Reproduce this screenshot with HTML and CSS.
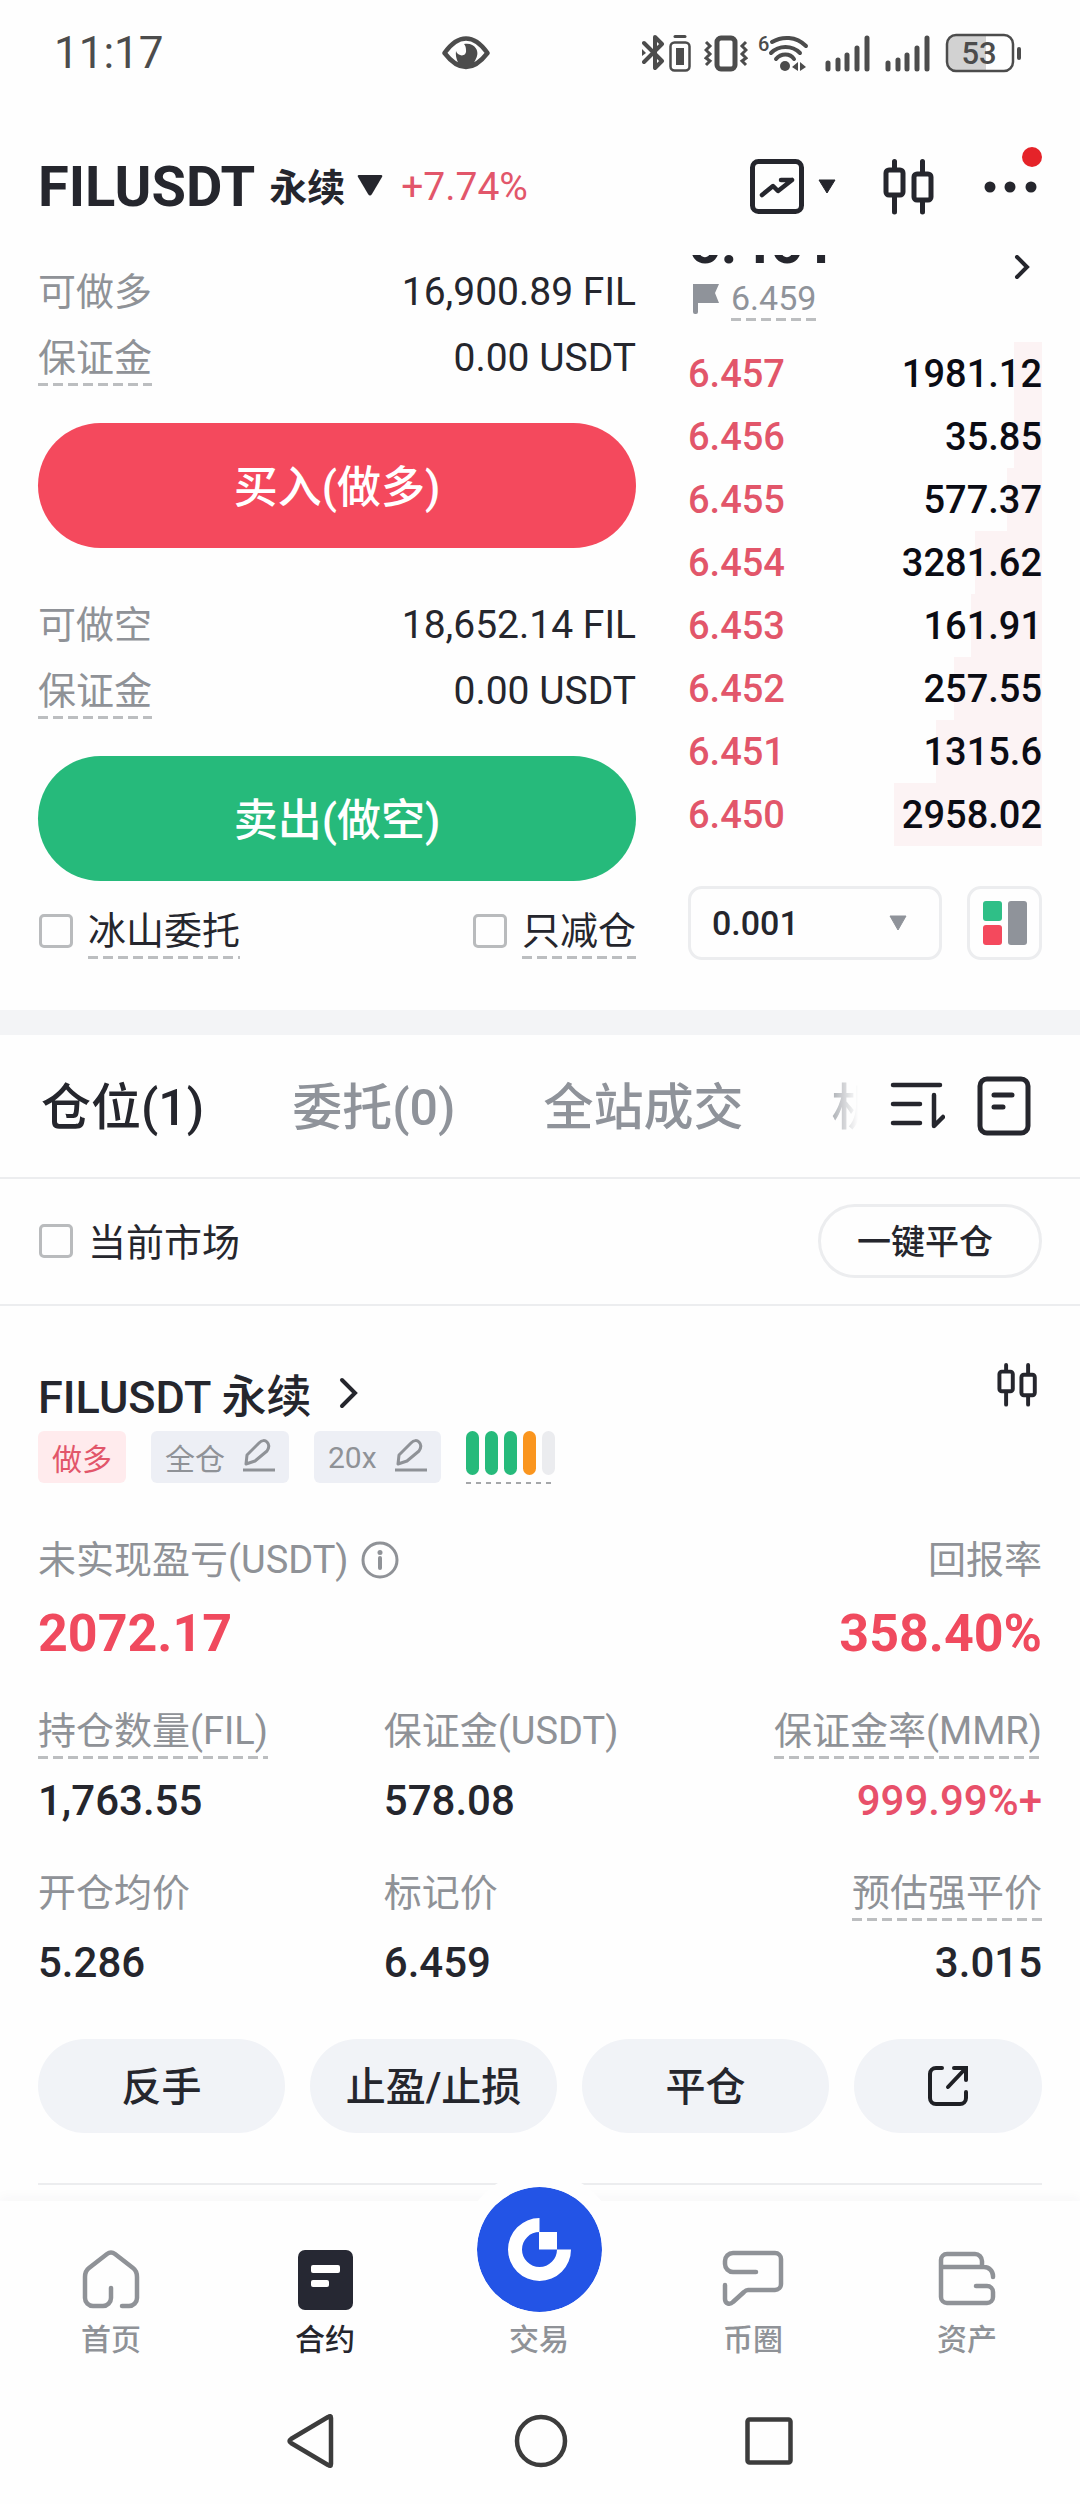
FILE: index.html
```html
<!DOCTYPE html>
<html lang="zh-CN">
<head>
    <meta charset="UTF-8">
    <meta name="viewport" content="width=device-width, initial-scale=1.0">
    <title>FILUSDT 永续</title>
    <link rel="stylesheet" href="styles.css">
</head>
<body>
    <!-- shared icons -->
    <svg class="sprite" aria-hidden="true">
        <symbol id="candles" viewBox="0 0 52 56">
            <g fill="none" stroke="#25262d" stroke-width="5" stroke-linecap="round">
                <rect x="3" y="11" width="17" height="25" rx="3"/>
                <rect x="31" y="15" width="17" height="26" rx="3"/>
                <path d="M11.5 2.500V10M11.500 37V53M39.500 2.500V13M39.500 42V53"/>
            </g>
        </symbol>
        <symbol id="pencil" viewBox="0 0 32 33">
            <g fill="none" stroke="#8f9297" stroke-width="3" stroke-linejoin="round">
                <path d="M3 25L4 16L16 4C19 1 22 1 24 3C27 6 26 9 24 12L12 22Z"/>
                <path d="M0 31H32"/>
            </g>
        </symbol>
        <symbol id="signal" viewBox="0 0 50 38">
            <path d="M4 29V35M14 26V35M23 21V35M33 14V35M43 4V35" fill="none" stroke="#4c4c4c" stroke-width="5" stroke-linecap="round"/>
        </symbol>
    </svg>

    <div class="status-bar">
        <span class="time">11:17</span>
        <svg class="eye" width="48" height="34" viewBox="0 0 48 34">
            <path d="M2.500 17C11 5 18 2.500 24 2.500S37 5 45.500 17C37 28 30 31 24 31S11 28 2.500 17Z" fill="none" stroke="#4c4c4c" stroke-width="4.500" stroke-linejoin="round"/>
            <path d="M22 8C32 6 37 14 35 20C34 24 31 27 31 31H17C17 26 13 23 14 15C16 21 25 21 24 14C24 11 23 9 22 8Z" fill="#4c4c4c"/>
        </svg>
        <div class="status-icons">
            <svg width="52" height="38" viewBox="0 0 52 38">
                <path d="M2 9L20 27L13 34V3L20 10L2 28" fill="none" stroke="#4c4c4c" stroke-width="4" stroke-linejoin="round" stroke-linecap="round"/>
                <path d="M0 15L4 19L0 22Z" fill="#4c4c4c"/>
                <rect x="28.500" y="8.500" width="19" height="28" rx="4" fill="none" stroke="#4c4c4c" stroke-width="2.500"/>
                <path d="M33 2.500H43" stroke="#4c4c4c" stroke-width="3" stroke-linecap="round"/>
                <rect x="34" y="14" width="8" height="17" fill="#4c4c4c"/>
            </svg>
            <svg width="44" height="38" viewBox="0 0 44 38">
                <rect x="13" y="4" width="18" height="31" rx="4" fill="none" stroke="#4c4c4c" stroke-width="5"/>
                <path d="M2 8L6 12L2 16L6 20L2 24L6 27L2 31M42 8L38 12L42 16L38 20L42 24L38 27L42 31" fill="none" stroke="#4c4c4c" stroke-width="3"/>
            </svg>
            <svg class="wifi" width="56" height="38" viewBox="0 0 56 38">
                <text x="0" y="17" font-size="20" font-weight="500" fill="#4c4c4c">6</text>
                <g fill="none" stroke="#4c4c4c" stroke-width="4" stroke-linecap="round">
                    <path d="M14 8C24 2 38 2 48 12M13 19C21 11 34 11 42 19M18 25C23 19 32 19 36 25"/>
                </g>
                <circle cx="27" cy="32" r="5" fill="#4c4c4c"/>
                <path d="M40 28V37L34 33ZM42 28L48 33L42 37Z" fill="#4c4c4c"/>
            </svg>
            <svg width="50" height="38"><use href="#signal"/></svg>
            <svg width="50" height="38"><use href="#signal"/></svg>
            <svg width="78" height="40" viewBox="0 0 78 40">
                <path d="M11 3H42V37H11C6 37 4 33 4 29V11C4 6 7 3 11 3Z" fill="#d2d2d2"/>
                <rect x="3" y="2" width="66" height="36" rx="9" fill="none" stroke="#4c4c4c" stroke-width="2.500"/>
                <path d="M75 16V25" stroke="#4c4c4c" stroke-width="4" stroke-linecap="round"/>
                <text x="35" y="31" text-anchor="middle" font-size="31" font-weight="500" fill="#4c4c4c">53</text>
            </svg>
        </div>
    </div>

    <header class="pair-header">
        <h1>FILUSDT</h1>
        <button class="contract-type">永续
            <svg width="26" height="22" viewBox="0 0 26 22"><path d="M2 1H24Q26 1 25 3L15 20Q13 23 11 20L1 3Q0 1 2 1Z" fill="#25262d"/></svg>
        </button>
        <span class="change">+7.74%</span>
        <div class="header-tools">
            <button class="chart-menu" aria-label="图表">
                <svg width="54" height="55" viewBox="0 0 54 55" fill="none" stroke="#25262d" stroke-linecap="round" stroke-linejoin="round">
                    <rect x="2.500" y="2.500" width="49" height="50" rx="6" stroke-width="5"/>
                    <path d="M12 36L23 27L28 32L42 21M31 21H42" stroke-width="4.500"/>
                </svg>
                <svg width="18" height="15" viewBox="0 0 18 15"><path d="M1 1H17L9 14Z" fill="#25262d" stroke="#25262d" stroke-linejoin="round"/></svg>
            </button>
            <button aria-label="K线"><svg width="52" height="56"><use href="#candles"/></svg></button>
            <button class="more" aria-label="更多">
                <svg width="60" height="12" viewBox="0 0 60 12" fill="#25262d"><circle cx="8" cy="6" r="5.500"/><circle cx="28" cy="6" r="5.500"/><circle cx="49" cy="6" r="5.500"/></svg>
                <span class="red-dot"></span>
            </button>
        </div>
    </header>

    <main>
        <section class="trade">
            <div class="order-form">
                <div class="row"><span class="label">可做多</span><span class="value">16,900.89 FIL</span></div>
                <div class="row"><span class="label dashed">保证金</span><span class="value">0.00 USDT</span></div>
                <button class="order-btn buy">买入(做多)</button>
                <div class="row second"><span class="label">可做空</span><span class="value">18,652.14 FIL</span></div>
                <div class="row"><span class="label dashed">保证金</span><span class="value">0.00 USDT</span></div>
                <button class="order-btn sell">卖出(做空)</button>
                <div class="row options">
                    <label class="check"><input type="checkbox"><span class="dashed">冰山委托</span></label>
                    <label class="check"><input type="checkbox"><span class="dashed">只减仓</span></label>
                </div>
            </div>

            <div class="order-book">
                <div class="last">
                    <span>6.461</span>
                    <svg width="28" height="66" viewBox="0 0 28 66"><path d="M3 42L13 52L3 62" fill="none" stroke="#25262d" stroke-width="4" stroke-linecap="round"/></svg>
                </div>
                <div class="mark">
                    <svg width="26" height="30" viewBox="0 0 26 30"><path d="M0 0H26L22 9L26 19H5V28Q5 30 3 30H2Q0 30 0 28Z" fill="#8f939a"/></svg>
                    <span class="dashed">6.459</span>
                </div>
                <table class="asks">
                    <tr style="--depth: 8%"><td>6.457</td><td>1981.12</td></tr>
                    <tr style="--depth: 8%"><td>6.456</td><td>35.85</td></tr>
                    <tr style="--depth: 10%"><td>6.455</td><td>577.37</td></tr>
                    <tr style="--depth: 19%"><td>6.454</td><td>3281.62</td></tr>
                    <tr style="--depth: 20%"><td>6.453</td><td>161.91</td></tr>
                    <tr style="--depth: 25%"><td>6.452</td><td>257.55</td></tr>
                    <tr style="--depth: 30%"><td>6.451</td><td>1315.6</td></tr>
                    <tr style="--depth: 42%"><td>6.450</td><td>2958.02</td></tr>
                </table>
                <div class="book-tools">
                    <div class="precision">
                        <select aria-label="精度">
                            <option>0.001</option>
                            <option>0.01</option>
                        </select>
                        <svg width="18" height="16" viewBox="0 0 18 16"><path d="M1 1H17L9 15Z" fill="#8f939a" stroke="#8f939a" stroke-linejoin="round"/></svg>
                    </div>
                    <button class="book-layout" aria-label="盘口布局">
                        <svg width="44" height="44" viewBox="0 0 44 44">
                            <rect width="19" height="20" rx="3" fill="#2fbf87"/>
                            <rect y="24" width="19" height="20" rx="3" fill="#f4495d"/>
                            <rect x="25" width="19" height="44" rx="3" fill="#8f939a"/>
                        </svg>
                    </button>
                </div>
            </div>
        </section>

        <nav class="tabs">
            <div class="tab-list">
                <button class="tab active">仓位(1)</button>
                <button class="tab">委托(0)</button>
                <button class="tab">全站成交</button>
                <button class="tab">机器人</button>
            </div>
            <div class="tab-tools">
                <button aria-label="排序">
                    <svg width="56" height="50" viewBox="0 0 56 50"><path d="M4 4H51M4 23H31M4 42H31M45 14V45L54 36" fill="none" stroke="#25262d" stroke-width="4.500" stroke-linecap="round" stroke-linejoin="round"/></svg>
                </button>
                <button aria-label="历史记录">
                    <svg width="54" height="60" viewBox="0 0 54 60" fill="none" stroke="#25262d" stroke-width="5" stroke-linecap="round">
                        <rect x="3" y="3" width="48" height="54" rx="7"/>
                        <path d="M17 19H35M17 31H26"/>
                    </svg>
                </button>
            </div>
        </nav>

        <div class="filter">
            <label class="check"><input type="checkbox"><span>当前市场</span></label>
            <button class="close-all">一键平仓</button>
        </div>

        <section class="position">
            <div class="position-title">
                <h2>FILUSDT 永续</h2>
                <svg width="22" height="34" viewBox="0 0 22 34"><path d="M4 4L17 17L4 30" fill="none" stroke="#25262d" stroke-width="4" stroke-linecap="round"/></svg>
                <button class="mini-chart" aria-label="K线"><svg width="41" height="44"><use href="#candles"/></svg></button>
            </div>
            <div class="tags">
                <span class="tag long">做多</span>
                <button class="tag">全仓 <svg width="32" height="33"><use href="#pencil"/></svg></button>
                <button class="tag">20x <svg width="32" height="33"><use href="#pencil"/></svg></button>
                <span class="risk"><i></i><i></i><i></i><i class="warn"></i><i class="off"></i></span>
            </div>

            <div class="summary">
                <div>
                    <div class="label">未实现盈亏(USDT)
                        <svg width="38" height="38" viewBox="0 0 38 38"><circle cx="19" cy="19" r="17" fill="none" stroke="#8f9297" stroke-width="3"/><circle cx="19" cy="11.500" r="2.500" fill="#8f9297"/><path d="M19 17V27" stroke="#8f9297" stroke-width="4" stroke-linecap="round"/></svg>
                    </div>
                    <div class="pnl">2072.17</div>
                </div>
                <div>
                    <div class="label end">回报率</div>
                    <div class="pnl">358.40%</div>
                </div>
            </div>

            <dl class="metrics">
                <div><dt><span class="dashed">持仓数量(FIL)</span></dt><dd>1,763.55</dd></div>
                <div><dt>保证金(USDT)</dt><dd>578.08</dd></div>
                <div><dt><span class="dashed">保证金率(MMR)</span></dt><dd class="red">999.99%+</dd></div>
                <div><dt>开仓均价</dt><dd>5.286</dd></div>
                <div><dt>标记价</dt><dd>6.459</dd></div>
                <div><dt><span class="dashed">预估强平价</span></dt><dd>3.015</dd></div>
            </dl>

            <div class="actions">
                <button>反手</button>
                <button>止盈/止损</button>
                <button>平仓</button>
                <button class="share" aria-label="分享">
                    <svg width="42" height="42" viewBox="0 0 42 42"><path d="M15 3H9A6 6 0 0 0 3 9V33A6 6 0 0 0 9 39H33A6 6 0 0 0 39 33V27M21 22L38 4M27 3H39V15" fill="none" stroke="#1f2025" stroke-width="4" stroke-linecap="round"/></svg>
                </button>
            </div>
        </section>
    </main>

    <nav class="bottom-nav">
        <a href="#">
            <svg width="58" height="60" viewBox="0 0 58 60"><path d="M40 56H47A8 8 0 0 0 55 48V27Q55 21 51 18L33 4Q29 1 25 4L7 18Q3 21 3 27V48A8 8 0 0 0 11 56H21A8 8 0 0 0 29 48V38" fill="none" stroke="#8f9297" stroke-width="4.500" stroke-linecap="round"/></svg>
            首页
        </a>
        <a href="#" class="current">
            <svg width="55" height="60" viewBox="0 0 55 60"><rect width="55" height="60" rx="7" fill="#262833"/><rect x="13" y="15" width="29" height="8" rx="2" fill="#fff"/><rect x="13" y="30" width="18" height="7" rx="2" fill="#fff"/></svg>
            合约
        </a>
        <a href="#" class="center">
            <svg width="125" height="125" viewBox="0 0 125 125">
                <circle cx="62.500" cy="62.500" r="62.500" fill="#2354e6"/>
                <path d="M62.500 31A31.500 31.500 0 1 0 94 62.500H80A17.500 17.500 0 1 1 62.500 45Z" fill="#fff"/>
                <rect x="62" y="45" width="18" height="17.500" fill="#fff"/>
            </svg>
            <span>交易</span>
        </a>
        <a href="#">
            <svg width="62" height="56" viewBox="0 0 62 56"><path d="M34 22H11A8 8 0 0 1 3 14V11A8 8 0 0 1 11 3H53A6 6 0 0 1 59 9V34A6 6 0 0 1 53 40H26Q24 40 22 42L11 52C8 55 3 54 3 49V35" fill="none" stroke="#8f9297" stroke-width="4.500" stroke-linecap="round"/></svg>
            币圈
        </a>
        <a href="#">
            <svg width="58" height="56" viewBox="0 0 58 56"><path d="M3 17V10A6 6 0 0 1 9 4H37A7 7 0 0 1 44 11V17M3 17H46A9 9 0 0 1 55 26V27M3 17V47A6 6 0 0 0 9 53H49A6 6 0 0 0 55 47V42A6 6 0 0 0 49 36H38" fill="none" stroke="#8f9297" stroke-width="4.500" stroke-linecap="round"/></svg>
            资产
        </a>
    </nav>

    <div class="system-nav">
        <button aria-label="返回"><svg width="50" height="56" viewBox="0 0 50 56"><path d="M44 5V51Q44 54 41 52L4 30Q1 28 4 26L41 4Q44 2 44 5Z" fill="none" stroke="#3c3c3c" stroke-width="4.500"/></svg></button>
        <button aria-label="主页"><svg width="54" height="54" viewBox="0 0 54 54"><circle cx="27" cy="27" r="24" fill="none" stroke="#3c3c3c" stroke-width="4.500"/></svg></button>
        <button aria-label="最近任务"><svg width="48" height="48" viewBox="0 0 48 48"><rect x="2.500" y="2.500" width="43" height="43" rx="2" fill="none" stroke="#3c3c3c" stroke-width="4.500"/></svg></button>
    </div>
</body>
</html>
```
FILE: styles.css
```css
* {
    margin: 0;
    padding: 0;
    box-sizing: border-box;
}

body {
    background: #fefefe;
    color: #25262d;
    font-family: Roboto, "Noto Sans CJK SC", sans-serif;
    font-size: 38px;
    overflow-x: hidden;
}

button, select {
    font: inherit;
    color: inherit;
    background: none;
    border: none;
}

button {
    display: flex;
    align-items: center;
    justify-content: center;
    white-space: nowrap;
}

svg {
    display: block;
    flex: none;
}

.sprite {
    position: absolute;
    width: 0;
    height: 0;
}

/* status bar */
.status-bar {
    display: flex;
    align-items: center;
    height: 106px;
    padding: 0 58px 0 54px;
    color: #4c4c4c;
}

.time {
    width: 388px;
    font-size: 44px;
}

.status-icons {
    display: flex;
    align-items: center;
    gap: 10px;
    margin-left: auto;
}

.wifi {
    overflow: visible;
}

/* header */
.pair-header {
    display: flex;
    align-items: center;
    height: 149px;
    padding: 12px 38px 0;
}

.pair-header h1 {
    font-size: 56px;
    font-weight: 700;
}

.contract-type {
    gap: 12px;
    margin-left: 14px;
    padding-bottom: 4px;
    font-weight: 700;
}

.change {
    margin-left: 18px;
    color: #e2566a;
    font-size: 39px;
}

.header-tools {
    display: flex;
    align-items: center;
    gap: 47px;
    margin-left: auto;
}

.chart-menu {
    gap: 14px;
}

.more {
    position: relative;
    height: 56px;
}

.red-dot {
    position: absolute;
    top: -12px;
    right: 0;
    width: 20px;
    height: 20px;
    border-radius: 50%;
    background: #e52329;
}

/* trade area */
.trade {
    display: flex;
    justify-content: space-between;
    gap: 52px;
    padding: 0 38px 46px;
    border-bottom: 25px solid #f3f4f6;
    overflow: hidden;
}

.order-form {
    flex: 598;
    padding-top: 4px;
}

.row {
    display: flex;
    align-items: center;
    justify-content: space-between;
    height: 66px;
    line-height: 56px;
}

.row.second {
    margin-top: 43px;
}

.row.options {
    margin-top: 17px;
}

.label {
    color: #8f9297;
}

.value {
    font-size: 39px;
}

.dashed {
    background: repeating-linear-gradient(to right, #bcbec0 0, #bcbec0 10px, transparent 10px, transparent 15px) bottom left / 100% 3px no-repeat;
}

.order-btn {
    width: 100%;
    height: 125px;
    margin-top: 32px;
    padding-bottom: 4px;
    border-radius: 63px;
    color: #fff;
    font-size: 44px;
    font-weight: 500;
}

.buy {
    background: #f4495d;
}

.sell {
    background: #26ba7b;
}

.order-btn + .second {
    margin-top: 44px;
}

.check {
    display: flex;
    align-items: center;
    gap: 15px;
}

.check input {
    appearance: none;
    width: 34px;
    height: 34px;
    margin-left: 1px;
    border: 3px solid #b9bbbd;
    border-radius: 5px;
}

/* order book */
.order-book {
    flex: 354;
}

/* scrolled under the header, only its lower edge shows */
.last {
    display: flex;
    justify-content: space-between;
    height: 66px;
    margin-top: -40px;
    font-size: 57px;
    font-weight: 700;
    line-height: 58px;
}

.mark {
    display: flex;
    align-items: center;
    gap: 12px;
    padding-left: 5px;
    color: #8f939a;
    font-size: 34px;
    line-height: 34px;
}

.mark svg {
    margin-bottom: 4px;
}

.mark .dashed {
    padding-bottom: 6px;
}

.asks {
    width: 100%;
    margin-top: 21px;
    border-collapse: collapse;
    font-weight: 500;
}

.asks tr {
    height: 63px;
    background: linear-gradient(to left, #fcf3f4 var(--depth), transparent var(--depth));
}

.asks td:first-child {
    color: #e2566a;
}

.asks td:last-child {
    color: #0b0c14;
    text-align: right;
}

.book-tools {
    display: flex;
    gap: 25px;
    margin-top: 40px;
}

.precision {
    position: relative;
    flex: 1;
}

.precision select {
    appearance: none;
    width: 100%;
    height: 74px;
    padding: 0 21px;
    border: 3px solid #ecedef;
    border-radius: 14px;
    font-size: 34px;
    font-weight: 500;
}

.precision svg {
    position: absolute;
    top: 29px;
    right: 35px;
    pointer-events: none;
}

.book-layout {
    width: 75px;
    height: 74px;
    border: 3px solid #ecedef;
    border-radius: 14px;
}

/* tabs */
.tabs {
    display: flex;
    align-items: center;
    justify-content: space-between;
    height: 144px;
    padding: 0 49px 0 41px;
    border-bottom: 2px solid #ecedef;
}

.tab-list {
    display: flex;
    flex: 1;
    gap: 88px;
    overflow: hidden;
    mask-image: linear-gradient(to left, transparent, #000 36px);
}

.tab {
    padding-bottom: 6px;
    color: #8f939a;
    font-size: 50px;
    font-weight: 500;
}

.tab.active {
    color: #25262d;
}

.tab-tools {
    display: flex;
    align-items: center;
    gap: 32px;
    padding-left: 31px;
}

.filter {
    display: flex;
    align-items: center;
    justify-content: space-between;
    height: 127px;
    padding: 0 38px 2px;
    border-bottom: 2px solid #ecedef;
}

.filter .check span {
    padding-bottom: 2px;
}

.close-all {
    height: 74px;
    padding: 0 46px 2px 36px;
    border: 3px solid #ecedef;
    border-radius: 37px;
    font-size: 34px;
    font-weight: 500;
}

/* position card */
.position {
    margin: 0 38px;
    padding: 57px 0 50px;
    border-bottom: 2px solid #ecedef;
}

.position-title {
    display: flex;
    align-items: center;
    gap: 27px;
    height: 60px;
}

.position-title h2 {
    font-size: 45px;
    font-weight: 500;
}

.mini-chart {
    align-self: flex-start;
    margin: 0 4px 0 auto;
}

.tags {
    display: flex;
    gap: 25px;
    margin-top: 8px;
}

.tag {
    display: flex;
    align-items: center;
    gap: 18px;
    height: 52px;
    padding: 0 14px;
    border-radius: 6px;
    background: #edeff5;
    color: #8f9297;
    font-size: 30px;
}

.tag svg {
    margin-bottom: 4px;
}

.tag.long {
    background: #ffebed;
    color: #e2566a;
}

.risk {
    display: flex;
    gap: 6px;
    height: 53px;
    padding-bottom: 9px;
    background: repeating-linear-gradient(to right, #a5a7aa 0, #a5a7aa 5px, transparent 5px, transparent 10px) bottom left / 100% 2px no-repeat;
}

.risk i {
    width: 13px;
    border-radius: 7px;
    background: #26ba7b;
}

.risk .warn {
    background: #fa951e;
}

.risk .off {
    background: #ebecef;
}

.summary {
    display: flex;
    justify-content: space-between;
    margin-top: 48px;
}

.summary .label {
    display: flex;
    align-items: center;
    gap: 12px;
    line-height: 56px;
}

.summary .end {
    justify-content: flex-end;
}

.pnl {
    margin-top: 16px;
    color: #f04a5e;
    font-size: 52px;
    font-weight: 700;
    line-height: 60px;
}

.metrics {
    display: grid;
    grid-template-columns: 31fr 30fr 29fr;
    row-gap: 39px;
    margin-top: 39px;
}

.metrics div:nth-child(3n) {
    text-align: right;
}

.metrics dt {
    color: #8f9297;
    line-height: 56px;
}

.metrics dt .dashed {
    display: inline-block;
    vertical-align: top;
}

.metrics dd {
    margin-top: 17px;
    font-size: 42px;
    font-weight: 500;
    line-height: 50px;
}

.metrics .red {
    color: #e8506a;
}

.actions {
    display: flex;
    gap: 25px;
    margin-top: 51px;
}

.actions button {
    flex: 247;
    height: 94px;
    padding-bottom: 4px;
    border-radius: 47px;
    background: #f1f3f7;
    font-size: 40px;
    font-weight: 500;
}

.actions .share {
    flex: 188;
    padding-bottom: 0;
}

/* bottom navigation */
.bottom-nav {
    position: relative;
    display: flex;
    height: 178px;
    margin-top: 16px;
    padding: 49px 6px 0 4px;
    background: #fefefe;
    box-shadow: 0 -3px 12px rgba(40, 50, 70, 0.04);
}

.bottom-nav a {
    display: flex;
    flex: 1;
    flex-direction: column;
    align-items: center;
    justify-content: space-between;
    height: 112px;
    color: #8f9297;
    font-size: 30px;
    font-weight: 500;
    line-height: 44px;
    text-decoration: none;
}

.bottom-nav .current {
    color: #25262d;
}

.bottom-nav .center {
    height: 175px;
    margin-top: -63px;
}

.center svg {
    border-radius: 50%;
    box-shadow: 0 0 0 16px #fefefe;
}

.system-nav {
    position: relative;
    display: flex;
    align-items: center;
    justify-content: space-between;
    height: 124px;
    padding: 0 287px;
    background: #fefefe;
}
```
